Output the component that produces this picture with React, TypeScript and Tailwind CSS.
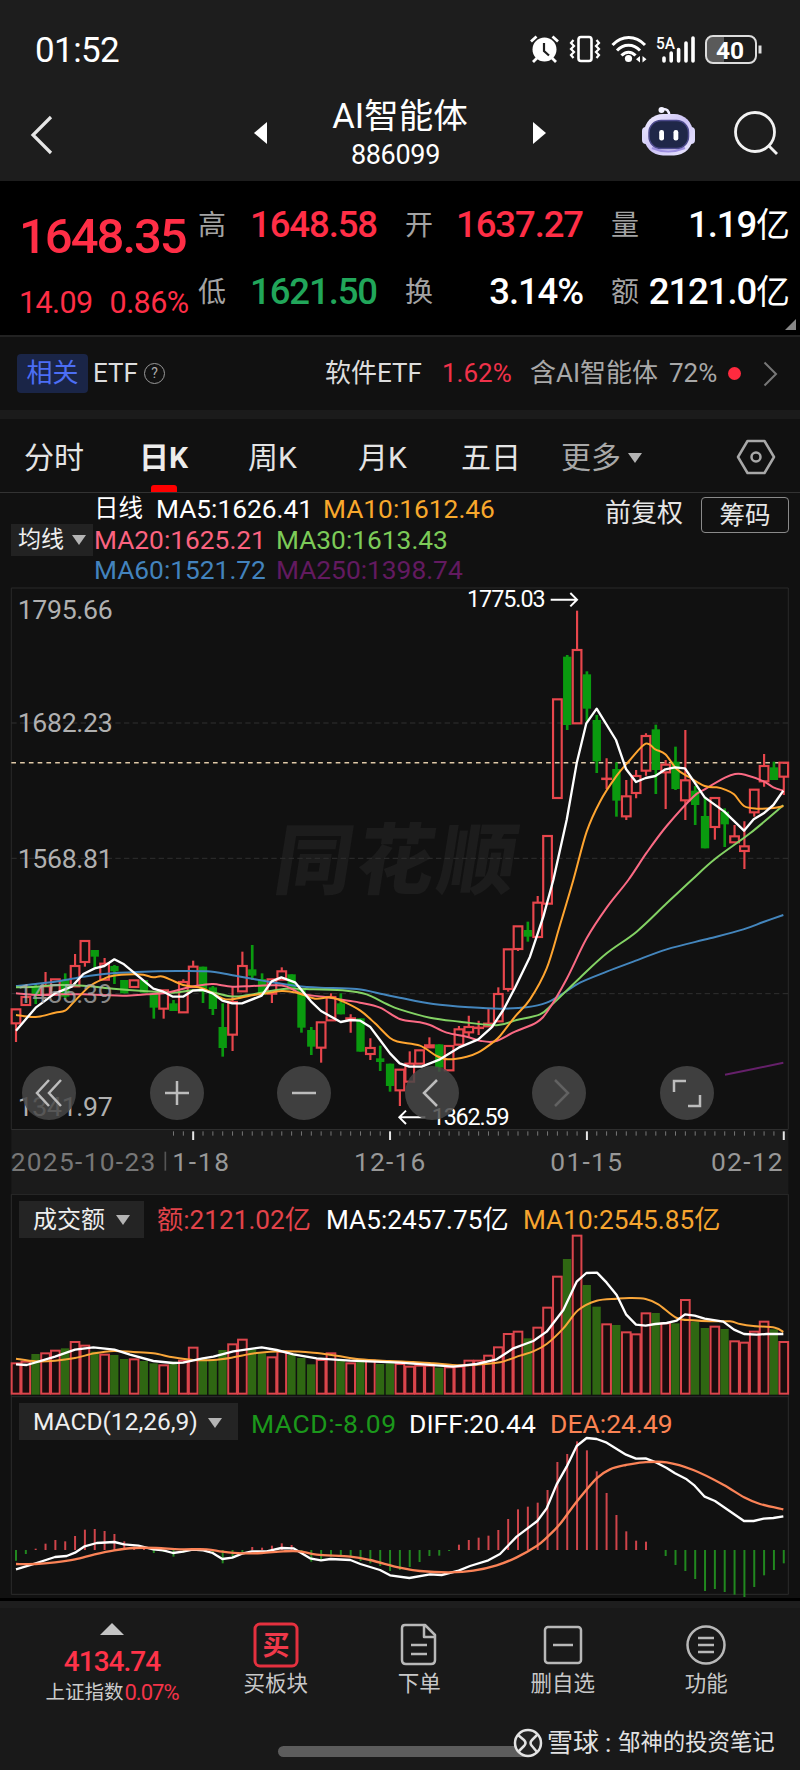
import type { ReactNode } from "react"

type Bar = [string, number]
type Candle = [string, number, number, number, number]

// Charts are drawn on a grid of three units per pixel
const X0 = 48
const STEP = 29.53
const cx = (i: number) => X0 + STEP * i

const RED = "#e8464c"
const GREEN = "#0a9a0f"

// colour, high, body top, body bottom, low
const candles: Candle[] = [
  ["r", 1287, 1287, 1331, 1386], ["r", 1248, 1250, 1276, 1276], ["g", 1212, 1218, 1245, 1272], ["r", 1176, 1218, 1245, 1245],
  ["r", 1197, 1197, 1245, 1245], ["g", 1180, 1200, 1250, 1255], ["r", 1122, 1157, 1220, 1220], ["r", 1082, 1082, 1147, 1160],
  ["g", 1110, 1110, 1130, 1162], ["r", 1134, 1150, 1200, 1200], ["g", 1155, 1158, 1174, 1212], ["g", 1200, 1200, 1240, 1240],
  ["r", 1200, 1200, 1222, 1222], ["g", 1200, 1200, 1238, 1238], ["g", 1240, 1240, 1283, 1316], ["r", 1230, 1230, 1287, 1316],
  ["g", 1260, 1270, 1293, 1293], ["r", 1198, 1205, 1298, 1298], ["r", 1142, 1159, 1222, 1222], ["g", 1160, 1160, 1235, 1269],
  ["g", 1218, 1222, 1287, 1305], ["g", 1270, 1341, 1404, 1430], ["r", 1222, 1265, 1365, 1413], ["r", 1115, 1157, 1235, 1235],
  ["g", 1095, 1168, 1187, 1200], ["g", 1180, 1197, 1245, 1245], ["r", 1197, 1197, 1242, 1269], ["r", 1162, 1173, 1200, 1200],
  ["g", 1183, 1183, 1225, 1225], ["g", 1225, 1225, 1343, 1358], ["g", 1341, 1350, 1400, 1425], ["r", 1326, 1326, 1404, 1448],
  ["r", 1240, 1250, 1322, 1322], ["g", 1240, 1270, 1303, 1303], ["r", 1303, 1314, 1316, 1358], ["g", 1315, 1315, 1415, 1415],
  ["r", 1375, 1403, 1423, 1440], ["g", 1397, 1435, 1446, 1473], ["g", 1451, 1451, 1518, 1535], ["r", 1468, 1468, 1532, 1578],
  ["r", 1414, 1450, 1506, 1506], ["r", 1410, 1410, 1452, 1452], ["r", 1372, 1395, 1403, 1403], ["g", 1393, 1393, 1463, 1475],
  ["r", 1397, 1397, 1472, 1472], ["r", 1338, 1347, 1395, 1395], ["r", 1307, 1340, 1358, 1370], ["r", 1322, 1342, 1344, 1365],
  ["r", 1285, 1330, 1340, 1340], ["r", 1222, 1241, 1325, 1325], ["r", 1107, 1107, 1228, 1235], ["r", 1038, 1038, 1108, 1113],
  ["g", 1025, 1050, 1070, 1085], ["r", 948, 967, 1072, 1072], ["r", 767, 767, 972, 972], ["r", 357, 357, 655, 655],
  ["g", 225, 230, 435, 450], ["r", 92, 209, 431, 431], ["g", 274, 283, 386, 425], ["g", 405, 420, 544, 579],
  ["r", 535, 595, 597, 627], ["g", 547, 567, 662, 710], ["r", 600, 648, 710, 720], ["r", 570, 587, 640, 655],
  ["r", 460, 467, 573, 587], ["g", 434, 448, 570, 642], ["r", 540, 553, 578, 687], ["g", 500, 545, 627, 630],
  ["r", 450, 600, 662, 720], ["g", 618, 632, 675, 735], ["g", 650, 708, 805, 805], ["r", 653, 653, 742, 779],
  ["g", 685, 695, 733, 801], ["r", 735, 768, 788, 788], ["r", 724, 798, 814, 867], ["r", 628, 628, 698, 710],
  ["r", 522, 557, 605, 620], ["g", 545, 562, 600, 600], ["r", 547, 547, 591, 645],
]

const ma5 =
  "48,1352 107,1283 165,1240 215,1220 250,1182 284,1165 313,1158 343,1138 372,1153 402,1178 460,1226 490,1235 519,1250 549,1250 578,1232 608,1230 638,1240 667,1262 697,1270 726,1270 785,1247 815,1204 844,1192 885,1207 933,1264 963,1293 1022,1326 1051,1320 1081,1322 1110,1340 1140,1380 1170,1420 1199,1450 1228,1460 1265,1460 1320,1438 1376,1403 1435,1378 1475,1342 1510,1290 1545,1223 1590,1130 1630,1010 1660,900 1700,720 1730,550 1759,430 1790,386 1848,480 1878,567 1908,606 1937,594 1966,588 1996,568 2025,562 2055,565 2084,608 2114,652 2173,695 2232,752 2261,718 2291,700 2320,675 2350,632"
const ma10 =
  "48,1305 107,1311 165,1298 195,1292 225,1262 270,1218 313,1196 340,1187 400,1183 430,1184 460,1192 490,1190 549,1215 608,1225 667,1255 697,1258 756,1246 800,1240 845,1233 890,1238 945,1256 990,1252 1030,1265 1081,1292 1125,1330 1170,1374 1199,1386 1260,1397 1310,1428 1345,1438 1400,1430 1435,1417 1475,1390 1500,1368 1545,1310 1590,1258 1640,1165 1680,1035 1720,900 1760,755 1800,665 1848,590 1890,540 1937,491 1966,508 1996,523 2030,567 2065,590 2114,618 2150,622 2173,628 2202,643 2232,678 2270,686 2320,684 2350,678"
const ma20 =
  "48,1240 120,1245 180,1243 250,1243 380,1247 440,1243 500,1238 570,1221 608,1215 640,1212 697,1220 756,1218 820,1216 860,1220 910,1243 970,1250 1045,1262 1080,1268 1140,1283 1199,1317 1260,1327 1290,1335 1340,1358 1400,1370 1440,1382 1485,1384 1545,1355 1610,1327 1645,1290 1700,1197 1760,1075 1820,983 1885,900 1940,818 2000,738 2080,650 2114,628 2175,593 2205,582 2235,584 2291,604 2320,622 2350,632"
const ma30 =
  "48,1222 107,1220 180,1215 260,1218 340,1226 430,1233 520,1238 600,1230 690,1249 740,1246 800,1235 860,1226 940,1228 1040,1232 1100,1243 1160,1272 1199,1288 1290,1313 1380,1325 1490,1336 1550,1320 1620,1303 1660,1270 1740,1193 1820,1120 1910,1055 2000,970 2075,900 2145,837 2250,760 2350,676"
const ma60 =
  "48,1218 107,1212 180,1203 250,1190 320,1181 410,1176 530,1173 620,1174 690,1184 760,1197 830,1209 890,1218 960,1223 1070,1227 1150,1243 1199,1253 1300,1272 1410,1282 1500,1286 1580,1282 1640,1268 1690,1240 1740,1208 1820,1175 1900,1145 2000,1108 2130,1075 2230,1048 2290,1026 2350,1005"

const volumes: Bar[] = [
  ["r", 550], ["r", 545], ["g", 522], ["r", 520], ["r", 512], ["g", 505], ["r", 486], ["r", 497], ["g", 515], ["r", 524],
  ["g", 525], ["g", 537], ["r", 538], ["g", 543], ["g", 550], ["r", 556], ["g", 545], ["r", 542], ["r", 503], ["g", 535],
  ["g", 540], ["g", 510], ["r", 493], ["r", 479], ["g", 508], ["g", 520], ["r", 532], ["r", 515], ["g", 525], ["g", 534],
  ["g", 553], ["r", 540], ["r", 520], ["g", 540], ["r", 550], ["g", 545], ["r", 542], ["g", 552], ["g", 550], ["r", 552],
  ["r", 560], ["r", 557], ["r", 557], ["g", 563], ["r", 562], ["r", 560], ["r", 542], ["r", 542], ["r", 527], ["r", 502],
  ["r", 462], ["r", 455], ["g", 475], ["r", 443], ["r", 383], ["r", 290], ["g", 237], ["r", 167], ["g", 315], ["g", 380],
  ["r", 433], ["g", 435], ["r", 457], ["r", 463], ["r", 400], ["g", 399], ["r", 430], ["g", 430], ["r", 360], ["g", 425],
  ["g", 444], ["r", 440], ["g", 447], ["r", 484], ["r", 488], ["r", 455], ["r", 425], ["g", 448], ["r", 486],
]
const volMa5 =
  "48,553 80,555 125,542 165,530 225,509 280,502 343,509 390,524 460,543 519,549 549,548 608,535 640,530 700,514 785,502 830,510 880,523 950,535 1051,542 1199,548 1280,554 1360,560 1430,552 1490,538 1540,505 1600,483 1640,455 1690,390 1730,305 1759,279 1791,278 1820,308 1850,345 1878,403 1908,434 1937,437 1966,432 2000,429 2030,422 2055,403 2084,407 2114,416 2170,425 2202,449 2232,462 2270,464 2300,462 2350,462"
const volMa10 =
  "48,536 107,544 165,542 225,534 284,520 340,513 400,516 460,520 519,532 580,540 640,540 700,532 770,519 850,514 940,518 1010,527 1080,538 1170,543 1240,546 1300,550 1380,556 1450,552 1500,547 1560,527 1600,514 1640,492 1690,445 1735,390 1790,362 1850,356 1890,354 1937,357 1975,373 2030,414 2080,421 2130,424 2190,424 2220,432 2260,438 2325,443 2350,456"

// tip of each histogram bar, zero line at 480
const macd = [
  512, 492, 476, 461, 450, 454, 438, 419, 417, 423, 432, 454, 470, 474, 489, 486, 500, 488, 475, 476,
  486, 520, 500, 486, 471, 473, 467, 460, 465, 487, 515, 508, 500, 501, 501, 513, 520, 528, 543, 540,
  531, 516, 498, 497, 483, 464, 450, 443, 437, 420, 387, 358, 350, 338, 300, 216, 192, 154, 181, 244,
  309, 375, 424, 452, 455, 480, 498, 525, 543, 567, 603, 597, 606, 614, 621, 591, 556, 540, 520,
]
const diff =
  "48,538 107,520 165,501 200,498 225,488 254,469 290,459 343,456 372,463 415,467 460,478 490,481 519,489 549,485 578,479 610,481 638,489 667,507 697,503 726,491 756,484 800,484 844,474 880,475 900,487 930,505 963,511 992,507 1051,510 1081,522 1140,540 1170,556 1228,564 1290,553 1325,555 1376,542 1410,528 1465,511 1500,492 1550,440 1612,393 1640,355 1670,283 1700,230 1730,168 1760,144 1790,147 1820,158 1878,194 1908,206 1937,205 1970,218 2000,234 2025,250 2060,268 2084,287 2114,320 2145,333 2232,393 2261,393 2291,386 2320,384 2350,379"
const dea =
  "48,522 107,522 165,517 225,508 284,493 343,481 402,474 470,474 540,478 620,478 667,485 726,490 785,489 850,484 900,484 950,494 1051,500 1110,510 1199,533 1260,543 1350,547 1420,542 1490,526 1550,502 1610,468 1640,443 1680,402 1730,335 1790,265 1830,238 1878,225 1930,217 2000,217 2080,240 2170,284 2232,322 2280,342 2350,358"

function Line({ points, color, width = 6 }: { points: string; color: string; width?: number }) {
  return <polyline points={points} fill="none" stroke={color} strokeWidth={width} strokeLinejoin="round" />
}

// Catmull-Rom through the same kind of point list
function Curve({ points, color, width = 6 }: { points: string; color: string; width?: number }) {
  const p = points.split(" ").map((s) => s.split(",").map(Number))
  let d = `M${p[0][0]} ${p[0][1]}`
  for (let i = 0; i < p.length - 1; i++) {
    const a = p[i - 1] || p[i]
    const b = p[i]
    const c = p[i + 1]
    const e = p[i + 2] || c
    d += `C${b[0] + (c[0] - a[0]) / 6} ${b[1] + (c[1] - a[1]) / 6} ${c[0] - (e[0] - b[0]) / 6} ${c[1] - (e[1] - b[1]) / 6} ${c[0]} ${c[1]}`
  }
  return <path d={d} fill="none" stroke={color} strokeWidth={width} />
}

function Down({ className = "" }: { className?: string }) {
  return (
    <svg className={className} width="14" height="10" viewBox="0 0 14 10">
      <path d="M0 0H14L7 10Z" fill="#b4b4b4" />
    </svg>
  )
}

function StatusBar() {
  return (
    <div className="flex h-[89px] items-center justify-between pl-[35px] pr-[38px] pt-2.5">
      <span className="mt-0.5 text-[35px] leading-none tracking-[-0.6px]">01:52</span>
      <svg width="234" height="34" viewBox="528 34 234 34" fill="none" stroke="#fff">
        {/* alarm */}
        <circle cx="544.500" cy="50.500" r="12" fill="#fff" stroke="none" />
        <path d="M531 42.500l5.500-5M558 42.500l-5.500-5M537 59l-4 4M552 59l4 4" strokeWidth="2.800" />
        <path d="M544 44v8l5 4.500" stroke="#1d1d1d" strokeWidth="2.200" />
        {/* vibrate */}
        <rect x="578.500" y="38" width="13" height="24" rx="2.500" strokeWidth="2.600" />
        <path d="M573.500 41l-2.500 3 3 3-3 3 3 3-3 3 2.500 3M596.500 41l2.500 3-3 3 3 3-3 3 3 3-2.500 3" strokeWidth="2.200" />
        {/* wifi */}
        <path d="M612.500 46c9.500-10 23-10 32.500 0M617 51.500c6.500-7 16.500-7 23 0M621.500 56.500c4-4.500 10-4.500 14 0" strokeWidth="3" />
        <circle cx="628.500" cy="59.500" r="3.600" fill="#fff" stroke="none" />
        <path d="M640 57v6.500l-4-3.200zM642.500 57v6.500l4-3.200z" fill="#fff" stroke="none" />
        {/* signal */}
        <text x="656" y="49.500" fontSize="17" fontWeight="500" fill="#fff" stroke="none" textLength="19" lengthAdjust="spacingAndGlyphs">5A</text>
        <path d="M664 59v3M671.200 54v8M678.600 50.500v11.500M686 44v18M693 39v23" strokeWidth="3.600" strokeLinecap="round" />
        {/* battery */}
        <path d="M713 38h11v26h-11q-6 0-6-6V44q0-6 6-6z" fill="#5a5a5a" stroke="none" />
        <rect x="706" y="37" width="50" height="27" rx="7" stroke="#ddd" strokeWidth="2" />
        <path d="M760 46.500v8" stroke="#ddd" strokeWidth="3" />
        <text x="716" y="59.500" fontSize="24.500" fontWeight="700" fill="#fff" stroke="none" textLength="28">40</text>
      </svg>
    </div>
  )
}

function TitleBar() {
  return (
    <div className="flex h-[92px] items-start">
      <svg className="mt-[25px] ml-[28px]" width="26" height="42" viewBox="0 0 26 42" fill="none">
        <path d="M23 3L5 21L23 39" stroke="#e6e6e6" strokeWidth="3.200" />
      </svg>
      <svg className="mt-[33px] ml-[200px]" width="13" height="22" viewBox="0 0 13 22">
        <path d="M13 0V22L0 11Z" fill="#fff" />
      </svg>
      <div className="flex w-[266px] flex-col items-center pt-2">
        <span className="text-[34.5px] leading-[38px]">AI智能体</span>
        <span className="mt-[4px] -translate-x-[4.5px] text-[27px] leading-[33px] tracking-[-0.3px]">886099</span>
      </div>
      <svg className="mt-[33px]" width="13" height="22" viewBox="0 0 13 22">
        <path d="M0 0V22L13 11Z" fill="#fff" />
      </svg>
      <svg className="mt-[16px] ml-[94px]" width="56" height="54" viewBox="0 0 56 54">
        <defs>
          <linearGradient id="shell" x1="0" y1="0" x2="1" y2="1">
            <stop offset="0" stopColor="#f1efff" />
            <stop offset="0.5" stopColor="#cdc3f6" />
            <stop offset="1" stopColor="#eceaff" />
          </linearGradient>
        </defs>
        <path d="M22 4Q29 3 29.500 11" stroke="#efedff" strokeWidth="2.500" fill="none" />
        <circle cx="21.500" cy="5" r="3" fill="#f3f2ff" />
        <rect x="2" y="22" width="8" height="17" rx="4" fill="#dcd8fb" />
        <rect x="47" y="22" width="8" height="17" rx="4" fill="#dcd8fb" />
        <rect x="4" y="9" width="49" height="41.500" rx="19" fill="url(#shell)" />
        <path d="M12 43Q28 50 45 43" stroke="#9d8fe0" strokeWidth="2" fill="none" />
        <rect x="9" y="15.500" width="39.500" height="28" rx="12" fill="#1f2748" stroke="#4c4a8c" strokeWidth="1.500" />
        <rect x="19.200" y="25" width="4.800" height="10.500" rx="2.200" fill="#fff" />
        <rect x="33.500" y="25" width="4.800" height="10.500" rx="2.200" fill="#fff" />
      </svg>
      <svg className="mt-[20px] ml-[38px]" width="46" height="48" viewBox="0 0 46 48" fill="none" stroke="#f2f2f2" strokeWidth="2.800">
        <circle cx="21" cy="23" r="19.500" />
        <path d="M35 37L43 45" />
      </svg>
    </div>
  )
}

function Cell({ label, children, color = "text-[#ff2e46]" }: { label: string; children: ReactNode; color?: string }) {
  return (
    <div className="flex h-[67px] items-center justify-between whitespace-nowrap">
      <span className="text-[28px] text-[#a3a3a3]">{label}</span>
      <span className={`text-[36.5px] font-medium leading-none tracking-[-1.1px] ${color}`}>{children}</span>
    </div>
  )
}

function Quote() {
  return (
    <div className="relative flex h-[154px] bg-black pt-[11px]">
      <div className="w-[198px] pl-[19px] font-medium text-[#ff2e46]">
        <div className="pt-[20px] text-[49px] leading-[50px] tracking-[-2px]">1648.35</div>
        <div className="mt-[24px] flex gap-[17px] text-[30.5px] leading-[34px] font-normal tracking-[-0.6px]">
          <span>14.09</span>
          <span>0.86%</span>
        </div>
      </div>
      <div className="mr-7 w-[179px]">
        <Cell label="高">1648.58</Cell>
        <Cell label="低" color="text-[#21a65a]">1621.50</Cell>
      </div>
      <div className="mr-7 w-[178px]">
        <Cell label="开">1637.27</Cell>
        <Cell label="换" color="text-white">3.14%</Cell>
      </div>
      <div className="w-[178px]">
        <Cell label="量" color="text-white">1.19<span className="text-[34px] font-normal">亿</span></Cell>
        <Cell label="额" color="text-white">2121.0<span className="text-[34px] font-normal">亿</span></Cell>
      </div>
      <svg className="absolute right-1 bottom-[5px]" width="11" height="11" viewBox="0 0 11 11">
        <path d="M11 0V11H0Z" fill="#888" />
      </svg>
    </div>
  )
}

function EtfRow() {
  return (
    <div className="flex h-[75px] items-center border-t-2 border-[#222] bg-[#111] pl-[17px] text-[26px] whitespace-nowrap text-[#ddd]">
      <span className="flex h-[39px] w-[71px] items-center justify-center rounded-[4px] bg-[#1a2547] text-[#4c6ef5]">相关</span>
      <span className="ml-[5px] w-[51px]">ETF</span>
      <span className="flex h-[21px] w-[21px] items-center justify-center rounded-full border-[1.5px] border-[#999] text-[14px] text-[#aaa]">?</span>
      <span className="ml-[160px] w-[117px]">软件ETF</span>
      <span className="w-[88px] text-[#f0324a]">1.62%</span>
      <span className="w-[139px] text-[#a8a8a8]">含AI智能体</span>
      <span className="w-[59px] text-[#a8a8a8]">72%</span>
      <span className="h-[13px] w-[13px] rounded-full bg-[#ff2a3f]" />
      <svg className="ml-[22px]" width="15" height="26" viewBox="0 0 15 26" fill="none">
        <path d="M1.500 1.500L13 13L1.500 24.500" stroke="#777" strokeWidth="2" />
      </svg>
    </div>
  )
}

function Tabs() {
  return (
    <div className="flex h-[74px] items-center border-b-[1.5px] border-[#333] bg-[#111] pt-[3px] pl-[24px] text-[30px] whitespace-nowrap text-[#e4e4e4]">
      <span className="w-[115px]">分时</span>
      <span className="relative flex h-full w-[109px] items-center font-bold text-[#ececec]">
        日K
        <span className="absolute bottom-0 left-[12px] h-[7px] w-[26px] rounded-t-[3px] bg-[#ff0000]" />
      </span>
      <span className="w-[110px]">周K</span>
      <span className="w-[103px]">月K</span>
      <span className="w-[100px]">五日</span>
      <span className="text-[#a8a8a8]">更多</span>
      <Down className="ml-[7px] mt-0.5" />
      <svg className="ml-[94px]" width="40" height="36" viewBox="0 0 40 36" fill="none" stroke="#a8a8a8" strokeWidth="2.500">
        <path d="M11.500 2H28.500L38 18L28.500 34H11.500L2 18Z" strokeLinejoin="round" />
        <circle cx="20" cy="18" r="4.500" />
      </svg>
    </div>
  )
}

function MaLegend() {
  return (
    <div className="flex h-[95px] bg-[#111] whitespace-nowrap">
      <div className="mt-[31px] ml-[11px] flex h-[32px] w-[82px] items-center bg-[#222] pl-[7px] text-[23px] text-[#eee]">
        均线
        <Down className="ml-[8px]" />
      </div>
      <div className="ml-px w-[511px] pt-px text-[26.3px] leading-[30.5px]">
        <div className="flex">
          <span className="w-[62px] text-[24.5px] text-white">日线</span>
          <span className="w-[167px] text-white">MA5:1626.41</span>
          <span className="text-[#f8a82c]">MA10:1612.46</span>
        </div>
        <div className="flex">
          <span className="w-[182px] text-[#fb6380]">MA20:1625.21</span>
          <span className="text-[#7ccb58]">MA30:1613.43</span>
        </div>
        <div className="flex">
          <span className="w-[182px] text-[#4383bd]">MA60:1521.72</span>
          <span className="text-[#621a60]">MA250:1398.74</span>
        </div>
      </div>
      <span className="mt-[1px] w-[96px] text-[26px] leading-[38px] text-[#e6e6e6]">前复权</span>
      <span className="mt-[4px] flex h-[36px] w-[88px] items-center justify-center rounded-[4px] border-[1.5px] border-[#8a8a8a] text-[25.5px] text-[#e6e6e6]">筹码</span>
    </div>
  )
}

const axisLabels: [string, number][] = [
  ["1795.66", 117],
  ["1682.23", 457],
  ["1568.81", 863],
  ["1455.39", 1268],
  ["1341.97", 1608],
]

function Round({ children }: { children: ReactNode }) {
  return (
    <div className="flex h-[54px] w-[54px] items-center justify-center rounded-full bg-[#484848]/85">
      <svg width="30" height="30" viewBox="0 0 30 30" fill="none" stroke="#bdbdbd" strokeWidth="2.500">
        {children}
      </svg>
    </div>
  )
}

function PriceChart() {
  return (
    <div className="relative h-[541px] bg-[#111]">
      <svg className="block overflow-visible" width="800" height="541" viewBox="0 24 2400 1623">
        <text x="812" y="925" fontSize="232" fontWeight="900" fill="#1c1c1c" textLength="722" transform="translate(150 0) skewX(-9)">同花顺</text>
        <path d="M34 1647V24H2365V1647" fill="none" stroke="#2a2a2a" strokeWidth="3" />
        {[429, 835, 1241].map((y) => (
          <path key={y} d={`M34 ${y}H2365`} stroke="#303030" strokeWidth="3" strokeDasharray="16 10" />
        ))}
        <path d="M34 548H2365" stroke="#e0c9a8" strokeWidth="4.500" strokeDasharray="14 12.300" />
        {candles.map(([c, h, t, b, l], i) => {
          const x = cx(i)
          if (c === "g") {
            return (
              <g key={i} fill={GREEN}>
                <rect x={x - 4} y={h} width="8" height={l - h} />
                <rect x={x - 12.5} y={t} width="25" height={b - t} />
              </g>
            )
          }
          return (
            <g key={i} stroke={RED} strokeWidth="6.500" fill="none">
              <path d={`M${x} ${h}V${t}M${x} ${b}V${l}`} />
              <rect x={x - 13} y={t + 1} width="26" height={Math.max(b - t - 2, 1)} />
            </g>
          )
        })}
        <Curve points={ma60} color="#4486bd" />
        <Curve points={ma30} color="#83d264" />
        <Curve points={ma20} color="#fb6a84" />
        <Curve points={ma10} color="#ffa530" />
        <Line points={ma5} color="#fff" width={7} />
        <Line points="2175,1484 2260,1467 2350,1448" color="#65206a" />
        {axisLabels.map(([label, y]) => (
          <text key={label} x="53" y={y} fontSize="80" fill="#b0b0b0" textLength="285" opacity={label === "1455.39" ? 0.75 : 1}>{label}</text>
        ))}
        <text x="1401" y="80" fontSize="70" fill="#fff" textLength="236">1775.03</text>
        <path d="M1652 59H1730M1711 39L1731 59L1711 79" fill="none" stroke="#fff" strokeWidth="6" />
        <text x="1295" y="1635" fontSize="70" fill="#fff" textLength="234">1362.59</text>
        <path d="M1276 1612H1198M1218 1592L1198 1612L1218 1632" fill="none" stroke="#fff" strokeWidth="6" />
      </svg>
      <div className="absolute top-[478px] left-[22px] flex gap-[73.600px]">
        <Round><path d="M15 2L3 15L15 28M27 2L15 15L27 28" /></Round>
        <Round><path d="M15 3V27M3 15H27" /></Round>
        <Round><path d="M3 15H27" /></Round>
        <Round><path d="M20 2L7 15L20 28" /></Round>
        <Round><path d="M11 2L24 15L11 28" stroke="#626262" /></Round>
        <Round><path d="M2 14V3H14M16 28H28V17" /></Round>
      </div>
    </div>
  )
}

function DateAxis() {
  return (
    <svg className="block" width="800" height="65" viewBox="0 747 2400 195" fontSize="79">
      <rect x="34" y="747" width="2331" height="195" fill="#1b1b1b" />
      <path d="M34 748H2365" stroke="#2e2e2e" strokeWidth="4" />
      {Array.from({ length: 63 }, (_, k) => k + 16).map((i) => {
        const major = (i - 18) % 20 === 0
        return <path key={i} d={`M${cx(i)} 754V${major ? 780 : 767}`} stroke={major ? "#e6e6e6" : "#777"} strokeWidth={major ? 6 : 3} />
      })}
      <text x="32" y="872" fill="#777" textLength="434">2025-10-23</text>
      <path d="M496 815V872" stroke="#555" strokeWidth="5" />
      <g fill="#989898">
        <text x="517" y="872" textLength="170">1-18</text>
        <text x="1062" y="872" textLength="214">12-16</text>
        <text x="1651" y="872" textLength="215">01-15</text>
        <text x="2133" y="872" textLength="215">02-12</text>
      </g>
    </svg>
  )
}

function VolumeChart() {
  return (
    <div className="relative h-[204px] bg-[#111]">
      <svg className="block" width="800" height="204" viewBox="0 42 2400 612">
        <path d="M34 654V43H2365V654M34 650H2365" fill="none" stroke="#2c2c2c" strokeWidth="3" />
        {volumes.map(([c, y], i) =>
          c === "g" ? (
            <rect key={i} x={cx(i) - 13} y={y} width="25" height={644 - y} fill="#2f6712" />
          ) : (
            <rect key={i} x={cx(i) - 13} y={y} width="26" height={641 - y} fill="#1a0c0d" stroke="#dc454c" strokeWidth="6" />
          )
        )}
        <Curve points={volMa10} color="#f9a63a" />
        <Line points={volMa5} color="#fff" width={7} />
      </svg>
      <div className="absolute top-[7px] left-[19px] flex h-[37px] items-center text-[26.2px] whitespace-nowrap">
        <span className="flex h-full w-[125px] items-center justify-between bg-[#242424] px-[14px] text-[24px] text-[#eee]">
          成交额
          <Down />
        </span>
        <span className="ml-[13px] w-[169px] pt-0.5 text-[#e2434a]">额:2121.02亿</span>
        <span className="w-[197px] pt-0.5 text-white">MA5:2457.75亿</span>
        <span className="pt-0.5 text-[#f6a52f]">MA10:2545.85亿</span>
      </div>
    </div>
  )
}

function MacdChart() {
  return (
    <div className="relative h-[200px] bg-[#111]">
      <svg className="block" width="800" height="200" viewBox="0 24 2400 600">
        <path d="M34 24V613H2365V24" fill="none" stroke="#2c2c2c" strokeWidth="3" />
        {macd.map((y, i) => (
          <path key={i} d={`M${cx(i)} 480V${y}`} stroke={y < 480 ? "#cf444a" : "#21881f"} strokeWidth="6" />
        ))}
        <Line points={diff} color="#fff" width={7} />
        <Curve points={dea} color="#fb8357" width={7} />
      </svg>
      <div className="absolute top-[5px] left-[19px] flex h-[37px] items-center text-[26.500px] whitespace-nowrap">
        <span className="flex h-full w-[219px] items-center justify-between bg-[#242424] pt-0.5 pr-[16px] pl-[14px] text-[24.500px] text-[#eee]">
          MACD(12,26,9)
          <Down />
        </span>
        <span className="ml-[13px] w-[158px] pt-1 tracking-[0.500px] text-[#1b981b]">MACD:-8.09</span>
        <span className="w-[141px] pt-1 text-white">DIFF:20.44</span>
        <span className="pt-1 text-[#fb8353]">DEA:24.49</span>
      </div>
    </div>
  )
}

function NavItem({ label, children }: { label: string; children: ReactNode }) {
  return (
    <div className="flex w-[143.500px] flex-col items-center">
      <svg width="46" height="46" viewBox="0 0 46 46" fill="none" stroke="#b8b8b8" strokeWidth="2.500" strokeLinejoin="round">
        {children}
      </svg>
      <span className="mt-px text-[21.500px] leading-[30px] text-[#c8c8c8]">{label}</span>
    </div>
  )
}

function BottomBar() {
  return (
    <div className="h-[169px] border-t-[7px] border-[#1e1e1e] bg-[#191919]">
      <div className="flex h-[138px] pt-[14px]">
        <div className="flex w-[204px] flex-col items-center pt-px pl-5">
          <svg width="24" height="12" viewBox="0 0 24 12">
            <path d="M12 0L24 12H0Z" fill="#c4c4c4" />
          </svg>
          <span className="mt-[11px] text-[28px] leading-[32px] font-medium tracking-[-1px] text-[#ff3349]">4134.74</span>
          <span className="flex items-center text-[19.500px] leading-[30px] text-[#ccc]">
            上证指数
            <span className="ml-px text-[22px] tracking-[-1px] text-[#f33449]">0.07%</span>
          </span>
        </div>
        <NavItem label="买板块">
          <rect x="2" y="2" width="42" height="42" rx="5" stroke="#e5313f" strokeWidth="3" />
          <text x="9.500" y="33" fontSize="27" fontWeight="700" fill="#f0394a" stroke="none">买</text>
        </NavItem>
        <NavItem label="下单">
          <path d="M9 3H29L39 13V38Q39 42 35 42H10Q6 42 6 38V6Q6 3 9 3ZM28 3V15H39M15 23H31M15 32H31" />
        </NavItem>
        <NavItem label="删自选">
          <rect x="5" y="5" width="36" height="36" rx="3" />
          <path d="M13 23H33" />
        </NavItem>
        <NavItem label="功能">
          <circle cx="23" cy="23" r="18.500" />
          <path d="M15 16H31M15 23H31M15 30H31" />
        </NavItem>
      </div>
      <div className="relative">
        <div className="ml-[278px] h-[11px] w-[250px] rounded-full bg-[#5c5c5c]" />
        <div className="absolute top-[-19px] left-[513px] flex h-[32px] items-center whitespace-nowrap text-[#e2e2e2]">
          <svg width="30" height="30" viewBox="0 0 30 30" fill="none" stroke="#e2e2e2" strokeWidth="2.500">
            <circle cx="15" cy="15" r="13" fill="#222" />
            <path d="M5 7L11 12Q14 15 11 18L5 24M25 6L19 12Q16 15 19 18L24 24" />
          </svg>
          <span className="ml-[4px] text-[26px]">雪球</span>
          <span className="ml-[6px] w-[13px] text-[26px]">:</span>
          <span className="text-[22.400px]">邹神的投资笔记</span>
        </div>
      </div>
    </div>
  )
}

export default function App() {
  return (
    <div className="h-[1770px] w-[800px] overflow-hidden bg-[#111] font-['Roboto','Noto_Sans_CJK_SC',sans-serif] text-white">
      <div className="bg-[#1d1d1d]">
        <StatusBar />
        <TitleBar />
      </div>
      <Quote />
      <EtfRow />
      <div className="h-[9px] bg-[#1b1b1b]" />
      <Tabs />
      <MaLegend />
      <PriceChart />
      <DateAxis />
      <VolumeChart />
      <MacdChart />
      <div className="h-[3px] bg-black" />
      <BottomBar />
    </div>
  )
}
